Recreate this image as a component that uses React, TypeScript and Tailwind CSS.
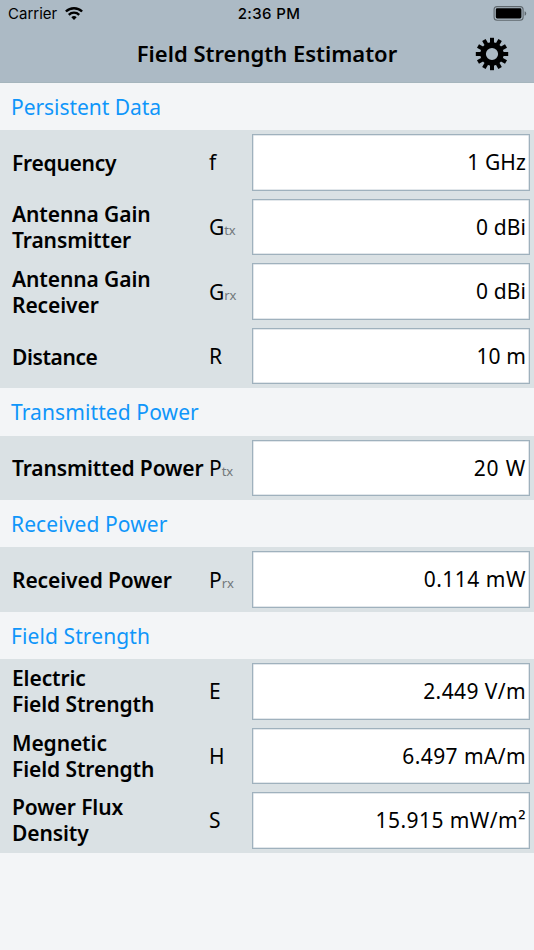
import clsx from 'clsx';

const sections = [
  {
    title: 'Persistent Data',
    titleClass: 'tracking-[-0.05px]',
    rows: [
      { lines: ['Frequency'], labelClass: 'tracking-[-0.25px]', symbol: 'f', sub: '', value: '1 GHz', valueClass: 'tracking-[0.1px]' },
      { lines: ['Antenna Gain', 'Transmitter'], labelClass: 'tracking-[-0.1px]', symbol: 'G', sub: 'tx', value: '0 dBi', valueClass: 'tracking-[0.1px]' },
      { lines: ['Antenna Gain', 'Receiver'], labelClass: 'tracking-[-0.1px]', symbol: 'G', sub: 'rx', value: '0 dBi', valueClass: 'tracking-[0.1px]' },
      { lines: ['Distance'], labelClass: 'tracking-[-0.4px]', symbol: 'R', sub: '', value: '10 m', valueClass: 'tracking-[0.1px]' }
    ]
  },
  {
    title: 'Transmitted Power',
    titleClass: 'tracking-[0.1px]',
    rows: [
      { lines: ['Transmitted Power'], labelClass: 'tracking-[-0.15px]', symbol: 'P', sub: 'tx', value: '20 W', valueClass: 'tracking-[0.8px]' }
    ]
  },
  {
    title: 'Received Power',
    titleClass: 'tracking-[0.1px]',
    rows: [
      { lines: ['Received Power'], labelClass: 'tracking-[-0.1px]', symbol: 'P', sub: 'rx', value: '0.114 mW', valueClass: 'tracking-[0.5px]' }
    ]
  },
  {
    title: 'Field Strength',
    titleClass: 'tracking-[0.1px]',
    rows: [
      { lines: ['Electric', 'Field Strength'], labelClass: 'tracking-[-0.1px]', symbol: 'E', sub: '', value: '2.449 V/m', valueClass: 'tracking-[0.4px]' },
      { lines: ['Megnetic', 'Field Strength'], labelClass: 'tracking-[-0.1px]', symbol: 'H', sub: '', value: '6.497 mA/m', valueClass: 'tracking-[0.4px]' },
      { lines: ['Power Flux', 'Density'], labelClass: 'tracking-[-0.1px]', symbol: 'S', sub: '', value: '15.915 mW/m²', valueClass: 'tracking-[0.45px]' }
    ]
  }
];

const teeth = [0, 30, 60, 90, 120, 150, 180, 210, 240, 270, 300, 330];

function GearIcon() {
  return (
    <svg viewBox="-17 -17 34 34" className="w-[34px] h-[34px]">
      <circle r="8.9" fill="none" stroke="#000" strokeWidth="5.6" />
      {teeth.map((angle) => (
        <path key={angle} d="M-2 -11h4v-5.2h-4z" transform={`rotate(${angle})`} />
      ))}
    </svg>
  );
}

function WifiIcon() {
  return (
    <svg viewBox="0 0 18 13" className="w-[18px] h-[13px]" fill="none" stroke="#000" strokeWidth="2.4">
      <path d="M.9 4.5a11.6 11.6 0 0 1 16.2 0" />
      <path d="M3.8 7.8a7.4 7.4 0 0 1 10.4 0" />
      <path d="M9 13L6.3 10.3a3.9 3.9 0 0 1 5.4 0z" fill="#000" stroke="none" />
    </svg>
  );
}

function BatteryIcon() {
  return (
    <svg viewBox="0 0 34 15" className="w-[34px] h-[15px]">
      <rect x="1.1" y=".6" width="29" height="13.6" rx="3" fill="none" stroke="#5f686e" strokeWidth="1.1" />
      <rect x="2.8" y="2.3" width="25.6" height="10.2" rx="1.4" />
      <path d="M31.6 5.2v4.6q1.6-.6 1.6-2.3t-1.6-2.3z" fill="#5f686e" />
    </svg>
  );
}

export default function App() {
  return (
    <div className="w-[534px] h-[950px] bg-[#f3f5f7] text-black overflow-hidden font-['Noto_Sans',sans-serif]">
      <header className="h-[83px] bg-[#acbac5] border-b border-[#a5b5bd]">
        <div className="h-[27px] grid grid-cols-3 items-center px-2 font-['Inter',sans-serif] text-[15px] leading-[27px]">
          <div className="flex items-center gap-2">
            <span>Carrier</span>
            <WifiIcon />
          </div>
          <span className="text-center font-medium tracking-[0.35px] pl-[4px]">2:36 PM</span>
          <div className="flex justify-end -mr-[1px]">
            <BatteryIcon />
          </div>
        </div>
        <div className="h-[54px] grid grid-cols-[1fr_auto_1fr] items-center">
          <span />
          <h1 className="text-[22px] font-semibold pb-[2px]">Field Strength Estimator</h1>
          <button className="justify-self-end mr-[25px]">
            <GearIcon />
          </button>
        </div>
      </header>

      {sections.map((section) => (
        <section key={section.title}>
          <h2 className={clsx('h-[47.2px] pl-[11px] text-[21px] leading-[49px] text-[#0f96fa]', section.titleClass)}>
            {section.title}
          </h2>
          <div className="bg-[#dae1e4]">
            {section.rows.map((row) => (
              <div key={row.lines.join(' ')} className="h-[64.55px] flex items-center pl-3 pr-1">
                <div className={clsx('w-[197px] shrink-0 text-[21px] leading-[26px] font-semibold whitespace-nowrap', row.lines.length === 1 && 'pt-px', row.labelClass)}>
                  {row.lines.map((line) => (
                    <div key={line}>{line}</div>
                  ))}
                </div>
                <div className="w-[42.6px] shrink-0 pt-[3px] text-[21px] leading-[26px]">
                  {row.symbol}
                  <span className="text-[13px] tracking-[-0.2px] text-[#71777a]">{row.sub}</span>
                </div>
                <div className={clsx('flex-1 h-[56.4px] bg-white border border-[#9fb1bd] shadow-[inset_0_0_0_0.5px_#c5d0d7] flex items-center justify-end pt-px pr-[3px] text-[21px]', row.valueClass)}>
                  {row.value}
                </div>
              </div>
            ))}
          </div>
        </section>
      ))}
    </div>
  );
}
